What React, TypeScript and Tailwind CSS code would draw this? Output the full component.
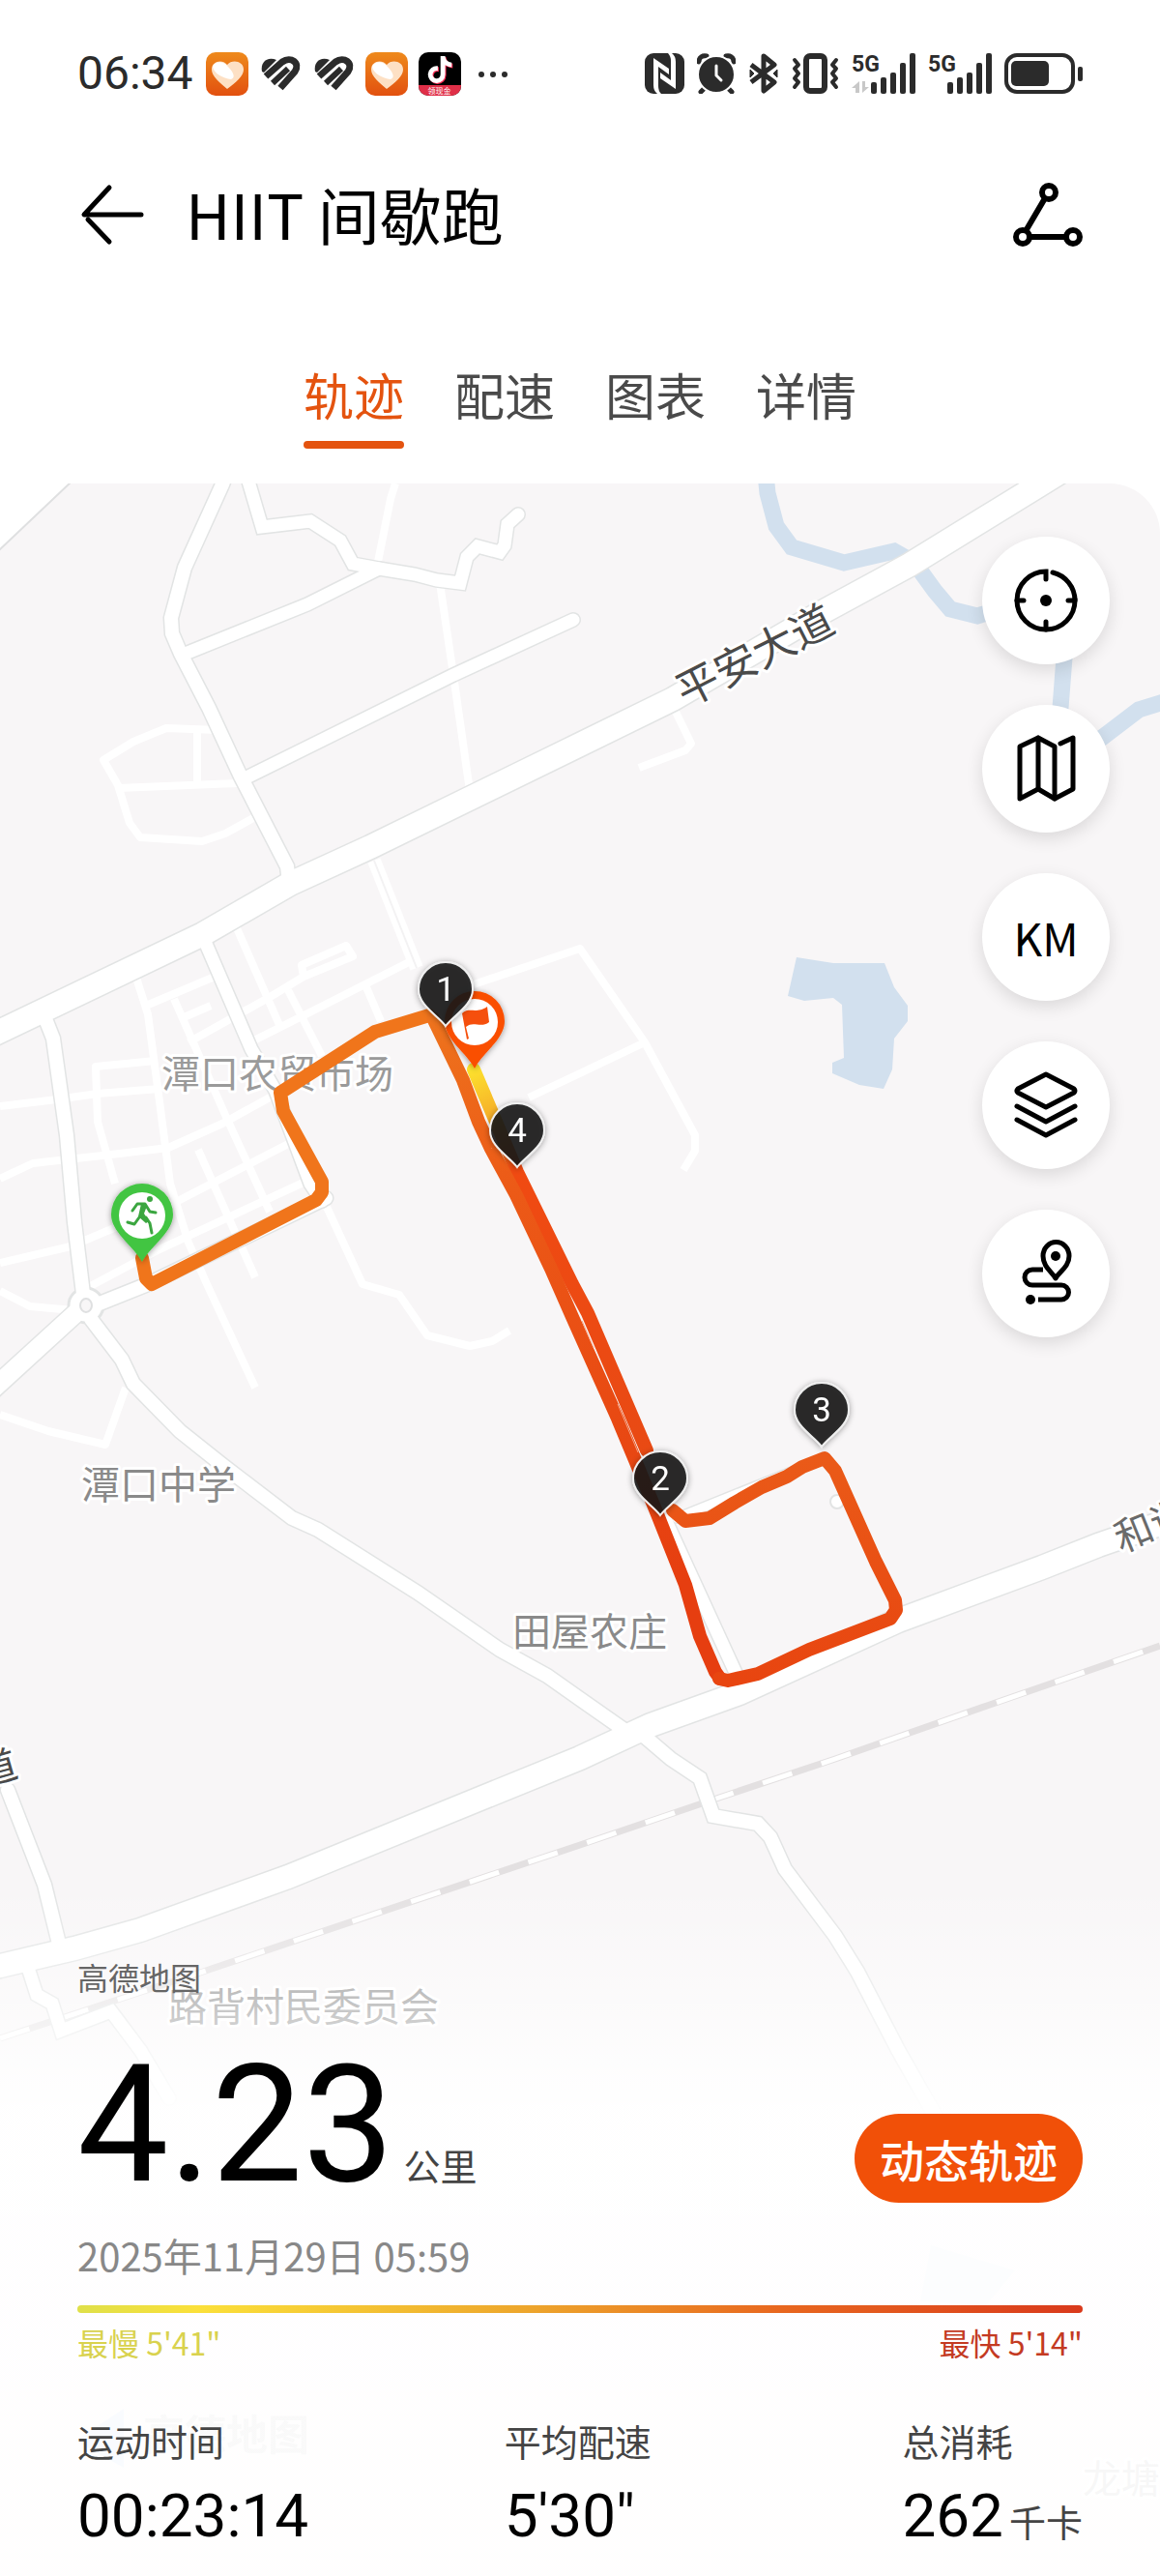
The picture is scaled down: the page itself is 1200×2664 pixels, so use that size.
import { useState } from 'react';
import type { ReactNode } from 'react';
import { FaTiktok } from 'react-icons/fa6';

const TABS = ['轨迹', '配速', '图表', '详情'];

// roads with an outline, drawn as a grey casing below a white line
const MAIN_ROADS = [
  { d: 'M-20 1076 L210 966 L300 914 L383 876 L600 770 L696 723 L849 634 L941 584 L1076 501 L1110 480', w: 24 },
  { d: 'M-20 2038 L0 2033 L77 2015 L145 1996 L298 1941 L600 1818 L673 1784 L765 1751 L929 1676 L1078 1621 L1136 1598 L1220 1569', w: 24 },
  { d: 'M84 1353 L-20 1448', w: 19 },
  { d: 'M236 485 L230 501 L191 587 L177 639 L178 655 L187 676 L216 732 L249 803 L297 896 L299 912', w: 14 },
  { d: 'M253 485 L258 501 L271 545 L321 539 L352 559 L365 583 L392 588 L429 594 L452 600 L476 603 L483 576 L494 565 L517 571 L522 564 L525 542 L536 532', w: 13 },
  { d: 'M189 677 L318 625 L392 588', w: 13 },
  { d: 'M253 805 L469 698 L593 641', w: 13 },
  { d: 'M44 1046 L55 1074 L69 1174 L77 1264 L86 1338', w: 14 },
  { d: 'M103 1348 L153 1328 L337 1239', w: 14 },
  { d: 'M210 969 L260 1085 L285 1128 L321 1224 L333 1242', w: 13 },
  { d: 'M94 1364 L126 1406 L138 1431 L186 1480 L230 1515 L302 1570 L329 1582 L432 1647 L517 1706 L566 1733 L600 1757 L650 1792 L667 1796 L694 1819 L724 1839 L738 1878 L784 1886 L797 1900 L812 1933 L864 2002 L887 2039 L929 2120 L980 2210', w: 14 },
  { d: 'M8 1851 L46 1949 L61 2010', w: 14 },
  { d: 'M29 2035 L38 2063 L54 2072 L63 2100 L115 2080 L145 2120 L175 2170', w: 13 },
  { d: 'M684 1562 L762 1732', w: 13 },
  { d: 'M700 1570 L834 1516', w: 9 },
];

const SIDE_STREETS = [
  'M409 500 L404 516 L390 586',
  'M455 603 L469 698 L486 818',
  'M226 755 L172 753 L138 767 L107 786 L122 812 L134 851 L145 866 L209 870 L233 862 L262 846',
  'M122 815 L245 810 M204 756 L204 810',
  'M337 1246 L375 1328 L413 1339 L442 1381 L486 1392 L509 1387 L527 1376',
  'M0 1335 L31 1351 L76 1355',
  'M130 1435 L109 1494 L50 1480 L0 1463',
  'M0 1144 L59 1137 L101 1131 L165 1126',
  'M0 1219 L34 1203 L115 1194 L174 1187 L230 1162 L279 1135',
  'M0 1306 L73 1289 L184 1242 L302 1181',
  'M88 1333 L165 1292 L318 1221',
  'M140 1008 L153 1049 L165 1139 L176 1224 L195 1285 L214 1328 L264 1435',
  'M161 1097 L99 1103 L101 1160 L119 1224',
  'M245 960 L289 1060',
  'M151 1040 L222 1010',
  'M195 1078 L281 1030 L314 1010 L365 989 L358 978 L312 998 L314 1010',
  'M253 1081 L352 1031 L425 994',
  'M180 1033 L233 1153 L279 1253',
  'M298 1024 L333 1092',
  'M379 1021 L394 1056',
  'M205 1189 L264 1321',
  'M188 1053 L218 1040',
  'M490 1018 L600 981 L667 1078 L719 1174 L719 1190 L707 1210',
  'M547 1135 L600 1110 L667 1078',
  'M696 730 L715 769 L709 776 L661 794',
];

const RAILWAY = 'M0 2108 L210 2039 L600 1908 L738 1861 L864 1819 L1021 1764 L1200 1702';

const MARKERS = [
  { n: 1, x: 461, y: 1062 },
  { n: 4, x: 535, y: 1208 },
  { n: 2, x: 683, y: 1568 },
  { n: 3, x: 850, y: 1497 },
];

const LABELS = [
  { text: '潭口农贸市场', x: 167, y: 1125, fill: '#9a9a9a' },
  { text: '潭口中学', x: 84, y: 1550, fill: '#8a8a8a' },
  { text: '田屋农庄', x: 530, y: 1702, fill: '#8a8a8a' },
  { text: '路背村民委员会', x: 174, y: 2090, fill: '#8a8a8a' },
  { text: '龙塘', x: 1120, y: 2578, fill: '#8a8a8a' },
];

function TrackMap() {
  return (
    <svg
      viewBox="0 500 1200 2164"
      preserveAspectRatio="xMidYMin slice"
      className="col-start-1 row-start-1 h-full w-full rounded-tr-[52px] bg-[#f8f6f7] font-['Noto_Sans_CJK_SC',sans-serif]"
      role="img"
      aria-label="跑步轨迹地图"
    >
      <defs>
        <linearGradient id="outbound" gradientUnits="userSpaceOnUse" x1="448" y1="1053" x2="700" y2="1640">
          <stop offset="0" stopColor="#ee731d" />
          <stop offset="0.3" stopColor="#ec5a17" />
          <stop offset="1" stopColor="#e63e10" />
        </linearGradient>
        <linearGradient id="inbound" gradientUnits="userSpaceOnUse" x1="490" y1="1100" x2="680" y2="1520">
          <stop offset="0" stopColor="#fde52e" />
          <stop offset="0.14" stopColor="#f5a828" />
          <stop offset="0.25" stopColor="#f04a12" />
          <stop offset="1" stopColor="#e84a14" />
        </linearGradient>
        <linearGradient id="loop" gradientUnits="userSpaceOnUse" x1="0" y1="1740" x2="0" y2="1510">
          <stop offset="0" stopColor="#e84510" />
          <stop offset="1" stopColor="#ea5a18" />
        </linearGradient>
        <filter id="pinShadow" x="-40%" y="-40%" width="180%" height="180%">
          <feDropShadow dx="0" dy="1" stdDeviation="3" floodColor="#000" floodOpacity="0.4" />
        </filter>
      </defs>

      {/* water */}
      <g fill="none" stroke="#d2e0ee" strokeWidth="17">
        <path d="M792 490 L794 510 L803 544 L819 566 L873 582 L925 570 L946 582 L967 611 L983 630 L1011 637 L1060 622 L1101 680 L1096 745" />
        <path d="M1120 782 L1136 766 L1178 734 L1210 724" />
      </g>
      <path
        fill="#d2e0ee"
        d="M824 990 L862 996 L915 996 L925 1021 L939 1040 L939 1056 L925 1074 L923 1106 L914 1126 L889 1122 L861 1110 L861 1099 L873 1094 L871 1039 L862 1032 L832 1035 L815 1030Z"
      />
      <path fill="#d2e0ee" d="M963 2322 L1050 2348 L1020 2384 L952 2380Z" />

      {/* roads */}
      <path d="M-2 498 H74 L-2 570Z" fill="#fff" stroke="#dfe0e1" strokeWidth="2" />
      <path d={RAILWAY} fill="none" stroke="#e3e0e1" strokeWidth="7" />
      <path d={RAILWAY} fill="none" stroke="#fff" strokeWidth="5" strokeDasharray="32 32" />
      <g fill="none" stroke="#fff" strokeWidth="8" strokeLinejoin="round">
        {SIDE_STREETS.map((d) => (
          <path key={d} d={d} />
        ))}
      </g>
      <g fill="none" stroke="#e2e4e4" strokeLinecap="round">
        {MAIN_ROADS.map((r) => (
          <path key={r.d} d={r.d} strokeWidth={r.w + 3} />
        ))}
        <circle cx="89" cy="1350" r="18" fill="#fff" strokeWidth="3" />
        <circle cx="866" cy="1553" r="7" fill="#fff" strokeWidth="2" />
      </g>
      <g fill="none" stroke="#fff" strokeLinecap="round">
        {MAIN_ROADS.map((r) => (
          <path key={r.d} d={r.d} strokeWidth={r.w} />
        ))}
        <path d="M387 890 L431 1001" strokeWidth="14" strokeLinecap="butt" />
      </g>
      <path d="M387 890 L431 1001" stroke="#f3f2f3" strokeWidth="2" />
      <ellipse cx="89" cy="1350" rx="6" ry="7" fill="#f8f6f7" stroke="#dfe0e1" strokeWidth="2" />

      {/* place names */}
      <g stroke="#fff" strokeWidth="6" strokeLinejoin="round" paintOrder="stroke" fontSize="40">
        {LABELS.map((l) => (
          <text key={l.text} x={l.x} y={l.y} fill={l.fill}>
            {l.text}
          </text>
        ))}
        <text fontSize="44" fill="#4a4a4a" textAnchor="middle" transform="translate(788 692) rotate(-27)">
          平安大道
        </text>
        <text fill="#6a6a6a" transform="translate(1160 1606) rotate(-22)">
          和谐
        </text>
        <text fill="#4a4a4a" transform="translate(-18 1848) rotate(-16)">
          道
        </text>
      </g>
      <g opacity="0.8">
        <path d="M78 2524 L128 2491 V2552Z" fill="#8fbcf5" />
        <text x="148" y="2534" fontSize="43" fontWeight="700" fill="#999">
          高德地图
        </text>
      </g>

      {/* run track */}
      <g fill="none" strokeWidth="14" strokeLinejoin="round" strokeLinecap="round">
        <path
          stroke="#f0751b"
          d="M147 1301 L151 1322 L157 1328 L327 1241 L333 1233 L333 1222 L293 1149 L290 1130 L388 1067 L444 1050"
        />
        <path stroke="url(#inbound)" d="M490 1106 L513 1160 L535 1212 L592 1328 L608 1358 L669 1500" />
        <path
          stroke="url(#outbound)"
          d="M448 1053 L479 1117 L495 1160 L508 1188 L534 1236 L570 1312 L592 1362 L639 1467 L657 1510 L680 1566 L709 1639 L724 1692 L740 1729 L745 1736"
        />
        <path
          stroke="url(#loop)"
          d="M744 1736 L753 1738 L784 1731 L837 1706 L921 1674 L927 1665 L926 1655 L906 1615 L864 1521 L853 1508 L830 1517 L814 1527 L788 1538 L760 1554 L734 1570 L709 1573 L696 1562"
        />
      </g>
      <path d="M602 1366 L614 1394 M639 1452 L660 1502" stroke="#f5a080" strokeWidth="1" />

      {/* start */}
      <g transform="translate(147 1305)" filter="url(#pinShadow)">
        <path d="M0 0 C-8 -16 -32 -30 -32 -49 A32 32 0 0 1 32 -49 C32 -30 8 -16 0 0Z" fill="#43c543" />
        <circle cx="0" cy="-48" r="24" fill="#fff" />
        <circle cx="8" cy="-65" r="3" fill="#3aa63f" />
        <g fill="none" stroke="#3aa63f" strokeWidth="3" strokeLinecap="round" strokeLinejoin="round">
          <path d="M-10 -53 L-5 -60 L3 -60 L8 -52 L14 -51" />
          <path d="M-15 -41 L-8 -39 L-3 -46" />
          <path d="M4 -46 L8 -40 L10 -30" />
        </g>
        <path d="M-1 -60 L5 -58 L2 -50 L7 -42 L4 -40 L-4 -47Z" fill="#3aa63f" />
      </g>

      {/* finish */}
      <g transform="translate(491 1105)" filter="url(#pinShadow)">
        <path d="M0 0 C-8 -16 -31 -30 -31 -49 A31 31 0 0 1 31 -49 C31 -30 8 -16 0 0Z" fill="#fa5005" />
        <circle cx="0" cy="-48" r="24" fill="#fff" />
        <path d="M-13 -57 C-6 -64 2 -56 13 -64 L15 -48 C6 -41 -1 -50 -9 -43 L-6 -31 L-8 -30Z" fill="#f5500a" />
      </g>

      {MARKERS.map((m) => (
        <g key={m.n} transform={`translate(${m.x} ${m.y})`} filter="url(#pinShadow)">
          <path
            d="M0 -1 C-8 -12 -28 -22 -28 -39 A28 28 0 0 1 28 -39 C28 -22 8 -12 0 -1Z"
            fill="#161616"
            fillOpacity="0.88"
            stroke="#efefef"
            strokeWidth="2"
          />
          <text y="-27" textAnchor="middle" fontSize="35" fill="#fff" className="font-['Roboto',sans-serif]">
            {m.n}
          </text>
        </g>
      ))}
    </svg>
  );
}

function HealthAppIcon() {
  return (
    <svg viewBox="0 0 44 45" className="h-[45px] w-11">
      <defs>
        <linearGradient id="healthBg" x1="0" y1="0" x2="0" y2="1">
          <stop offset="0" stopColor="#ee8a1c" />
          <stop offset="1" stopColor="#e2500f" />
        </linearGradient>
      </defs>
      <rect width="44" height="45" rx="10" fill="url(#healthBg)" />
      <path d="M22 38 C14 31 6 25 6 18 C6 9 17 7 22 13 C27 7 39 9 39 18 C39 25 31 31 22 38Z" fill="#fde0c4" />
      <path d="M7 15 C9 9 18 9 22 14 C27 19 32 26 26 28 C18 27 8 22 7 15Z" fill="#fff" />
    </svg>
  );
}

function StripedHeartIcon() {
  return (
    <svg viewBox="0 0 44 45" className="h-[45px] w-11" fill="none" stroke="#2b2b2b" strokeWidth="7">
      <path d="M3 20 C1 10 9 4 18 8 L5 21Z" fill="#2b2b2b" stroke="none" />
      <path d="M7 25 L24 10 C33 4 43 11 37 20 L22 37" />
      <path d="M14 32 L30 17" strokeWidth="6" />
    </svg>
  );
}

function SignalIcon({ data }: { data?: boolean }) {
  return (
    <svg viewBox="0 0 66 42" className="h-[42px] w-[66px] overflow-visible" fill="#2b2b2b">
      <text x="0" y="19" fontSize="23" fontWeight="700" className="font-['Roboto',sans-serif]">
        5G
      </text>
      {data && (
        <g fill="#c8c8c8">
          <path d="M8 29 V41 H4 V36 H0Z" />
          <path d="M11 41 V29 H14 V35 H18Z" />
        </g>
      )}
      <rect x="20" y="30" width="6" height="12" rx="2" />
      <rect x="30" y="25" width="6" height="17" rx="2" />
      <rect x="40" y="20" width="6" height="22" rx="2" />
      <rect x="50" y="10" width="6" height="32" rx="2" />
      <rect x="60" y="0" width="6" height="42" rx="2" />
    </svg>
  );
}

function StatusBar() {
  return (
    <div className="flex items-center justify-between px-20 pt-[52px] text-[#2b2b2b]">
      <div className="flex items-center gap-[11px]">
        <span className="mr-0.5 font-['Roboto',sans-serif] text-[48px] leading-[48px]">06:34</span>
        <HealthAppIcon />
        <StripedHeartIcon />
        <StripedHeartIcon />
        <HealthAppIcon />
        <div className="flex h-[45px] w-11 flex-col items-center overflow-hidden rounded-[10px] bg-black pt-1">
          <FaTiktok className="size-[28px] shrink-0 text-white drop-shadow-[1px_1px_0_#fe2c55]" />
          <span className="mt-0.5 w-full bg-[#e02f48] text-center font-['Noto_Sans_CJK_SC',sans-serif] text-[8px] leading-[12px] text-white">
            领现金
          </span>
        </div>
        <svg viewBox="0 0 44 45" className="h-[45px] w-11" fill="#2b2b2b">
          <circle cx="10" cy="23" r="3" />
          <circle cx="22" cy="23" r="3" />
          <circle cx="34" cy="23" r="3" />
        </svg>
      </div>

      <div className="flex items-center gap-[13px]">
        {/* NFC */}
        <svg viewBox="0 0 41 42" className="h-[42px] w-[41px]">
          <rect width="41" height="42" rx="9" fill="#2b2b2b" />
          <path d="M9 5 L25 16 V22 L14 14 V34 Q14 39 17 42 H13 Q9 39 9 33Z" fill="#fff" />
          <path d="M32 37 L16 26 V20 L27 28 V8 Q27 3 24 0 H28 Q32 3 32 9Z" fill="#fff" />
        </svg>
        {/* alarm */}
        <svg viewBox="0 0 40 42" className="h-[42px] w-10" fill="none" strokeLinecap="round">
          <path d="M8 36 L4 40 M32 36 L36 40" stroke="#2b2b2b" strokeWidth="5" />
          <path d="M2 9 C2 4 6 2 10 3 M38 9 C38 4 34 2 30 3" stroke="#2b2b2b" strokeWidth="5" />
          <circle cx="20" cy="22" r="19" fill="#2b2b2b" stroke="#fff" strokeWidth="2" />
          <path d="M20 13 V23 L25 28" stroke="#fff" strokeWidth="3" />
        </svg>
        {/* bluetooth */}
        <svg viewBox="0 0 32 42" className="h-[42px] w-8" fill="none" stroke="#2b2b2b" strokeWidth="5" strokeLinejoin="round">
          <path d="M3 12 L27 30 L16 39 V3 L27 12 L3 30" />
          <path d="M2 17 V25 L6 21Z M30 17 V25 L26 21Z" fill="#2b2b2b" strokeWidth="1" />
        </svg>
        {/* vibrate */}
        <svg viewBox="0 0 49 42" className="h-[42px] w-[49px]" fill="none" stroke="#2b2b2b" strokeLinejoin="round" strokeLinecap="round">
          <rect x="15" y="3" width="19" height="36" rx="4" strokeWidth="6" />
          <path d="M3 7 L7 12 L3 16 L7 21 L3 26 L7 30 L3 35" strokeWidth="4" />
          <path d="M46 7 L42 12 L46 16 L42 21 L46 26 L42 30 L46 35" strokeWidth="4" />
        </svg>
        <SignalIcon data />
        <SignalIcon />
        {/* battery */}
        <svg viewBox="0 0 81 42" className="h-[42px] w-[81px]" fill="#2b2b2b">
          <rect x="2" y="2" width="69" height="38" rx="11" fill="none" stroke="#2b2b2b" strokeWidth="4" />
          <rect x="7" y="8" width="39" height="26" rx="5" />
          <rect x="76" y="14" width="5" height="15" rx="2" />
        </svg>
      </div>
    </div>
  );
}

function MapButton({ label, children }: { label: string; children: ReactNode }) {
  return (
    <button
      aria-label={label}
      className="flex size-[132px] items-center justify-center rounded-full bg-white text-black shadow-[0_6px_18px_rgba(0,0,0,0.12)]"
    >
      {children}
    </button>
  );
}

function MapControls() {
  const icon = 'size-[72px] fill-none stroke-current stroke-5';

  return (
    <div className="flex flex-col items-end gap-[42px] pt-[55px] pr-[52px]">
      <MapButton label="定位">
        <svg viewBox="0 0 72 72" className={icon} strokeLinecap="round">
          <path d="M36 14 V6 A30 30 0 1 0 66 36 H59" />
          <path d="M43 7 A30 30 0 0 1 66 36 M6 36 H13 M36 66 V58" />
          <circle cx="36" cy="36" r="6" fill="currentColor" stroke="none" />
        </svg>
      </MapButton>
      <MapButton label="地图类型">
        <svg viewBox="0 0 72 72" className={icon} strokeLinecap="round" strokeLinejoin="round">
          <path d="M28 4 L9 13 V67 L28 57 L45 67 L64 57 V4 L51 10" />
          <path d="M28 57 V4 L45 13 V67" />
        </svg>
      </MapButton>
      <MapButton label="公里标记">
        <span className="font-['Noto_Sans_CJK_SC',sans-serif] text-[46px] leading-[48px]">KM</span>
      </MapButton>
      <MapButton label="图层">
        <svg viewBox="0 0 72 72" className={icon} strokeLinecap="round" strokeLinejoin="round">
          <path d="M36 4 L65 19 Q67 21 65 23 L36 38 L7 23 Q5 21 7 19Z" />
          <path d="M6 37 L36 53 L66 37" />
          <path d="M6 51 L36 67 L66 51" />
        </svg>
      </MapButton>
      <MapButton label="路线">
        <svg viewBox="0 0 72 72" className={icon} strokeLinejoin="round">
          <path d="M46 41 C42 34 33 29 33 18 A13 14 0 0 1 60 18 C60 29 50 34 46 41Z" />
          <circle cx="46" cy="18" r="5" fill="currentColor" stroke="none" />
          <path d="M33 32 H22 A8 8 0 0 0 22 48 H52 A7 7 0 0 1 52 63 H28" />
          <circle cx="20" cy="63" r="5" fill="currentColor" stroke="none" />
        </svg>
      </MapButton>
    </div>
  );
}

function Stat({ label, value, unit }: { label: string; value: string; unit?: string }) {
  return (
    <div className="flex flex-col whitespace-nowrap">
      <span className="text-[38px] leading-[56px] text-[#444]">{label}</span>
      <div className="flex items-baseline gap-1.5 pt-3">
        <span className="font-['Roboto',sans-serif] text-[62px] leading-[76px] text-black">{value}</span>
        {unit && <span className="text-[38px] text-[#444]">{unit}</span>}
      </div>
    </div>
  );
}

function Summary() {
  return (
    <div className="flex flex-col bg-[linear-gradient(to_bottom,rgba(255,255,255,0)_0px,rgba(255,255,255,0.4)_100px,rgba(255,255,255,0.95)_230px,rgba(255,255,255,0.93)_100%)] px-20 pt-[76px] pb-6">
      <span className="text-[32px] leading-[40px] text-[#666]">高德地图</span>

      <div className="flex items-end justify-between pt-[54px]">
        <div className="flex items-baseline gap-2.5">
          <span className="font-['Roboto',sans-serif] text-[168px] leading-[160px] text-black">4.23</span>
          <span className="text-[38px] text-[#444]">公里</span>
        </div>
        <button className="h-[92px] rounded-full bg-[#f15008] px-[26px] text-[46px] leading-[60px] font-medium text-white">
          动态轨迹
        </button>
      </div>

      <p className="pt-[26px] text-[40px] leading-[56px] text-[#888]">2025年11月29日 05:59</p>

      <div className="mt-6 h-2 rounded-full bg-[linear-gradient(to_right,#dfe04a,#fbe03a_12%,#eda52c_45%,#e8671f_70%,#d93a1c)]" />
      <div className="flex justify-between pt-2 text-[32px] leading-[44px]">
        <span className="text-[#d9d24e]">最慢 5'41"</span>
        <span className="text-[#c43a22]">最快 5'14"</span>
      </div>

      <div className="grid grid-cols-[443fr_413fr_184fr] pt-[52px]">
        <Stat label="运动时间" value="00:23:14" />
        <Stat label="平均配速" value={`5'30"`} />
        <Stat label="总消耗" value="262" unit="千卡" />
      </div>
    </div>
  );
}

export default function App() {
  const [tab, setTab] = useState('轨迹');

  return (
    <div className="flex min-h-screen flex-col bg-white font-['Noto_Sans_CJK_SC',sans-serif]">
      <StatusBar />

      <header className="flex items-center gap-10 px-20 pt-[76px]">
        <button aria-label="返回">
          <svg viewBox="0 0 72 64" className="h-16 w-[72px]" fill="none" stroke="#000" strokeWidth="5" strokeLinecap="round" strokeLinejoin="round">
            <path d="M33 4 L7 32 H66" />
            <path d="M11 37 L33 60" />
          </svg>
        </button>
        <h1 className="grow pb-1 text-[64px] leading-[88px] text-black">HIIT 间歇跑</h1>
        <button aria-label="分享">
          <svg viewBox="0 0 72 66" className="h-[66px] w-[72px]" fill="none" stroke="#000" strokeWidth="6">
            <circle cx="37" cy="10" r="7" />
            <circle cx="10" cy="56" r="7" />
            <circle cx="62" cy="56" r="7" />
            <path d="M33 16 L13 50 M17 56 H55" />
          </svg>
        </button>
      </header>

      <nav className="flex justify-center gap-[52px] pt-[102px] pb-9">
        {TABS.map((t) => (
          <button
            key={t}
            onClick={() => setTab(t)}
            className={`flex flex-col gap-2.5 text-[52px] leading-[76px] ${t === tab ? 'text-[#e4530f]' : 'text-[#4a4a4a]'}`}
          >
            {t}
            <span className={`h-2 w-full rounded-full ${t === tab ? 'bg-[#e4530f]' : 'bg-transparent'}`} />
          </button>
        ))}
      </nav>

      <main className="grid grow grid-cols-1 overflow-hidden">
        <TrackMap />
        <div className="col-start-1 row-start-1 flex flex-col justify-between">
          <MapControls />
          <Summary />
        </div>
      </main>
    </div>
  );
}
